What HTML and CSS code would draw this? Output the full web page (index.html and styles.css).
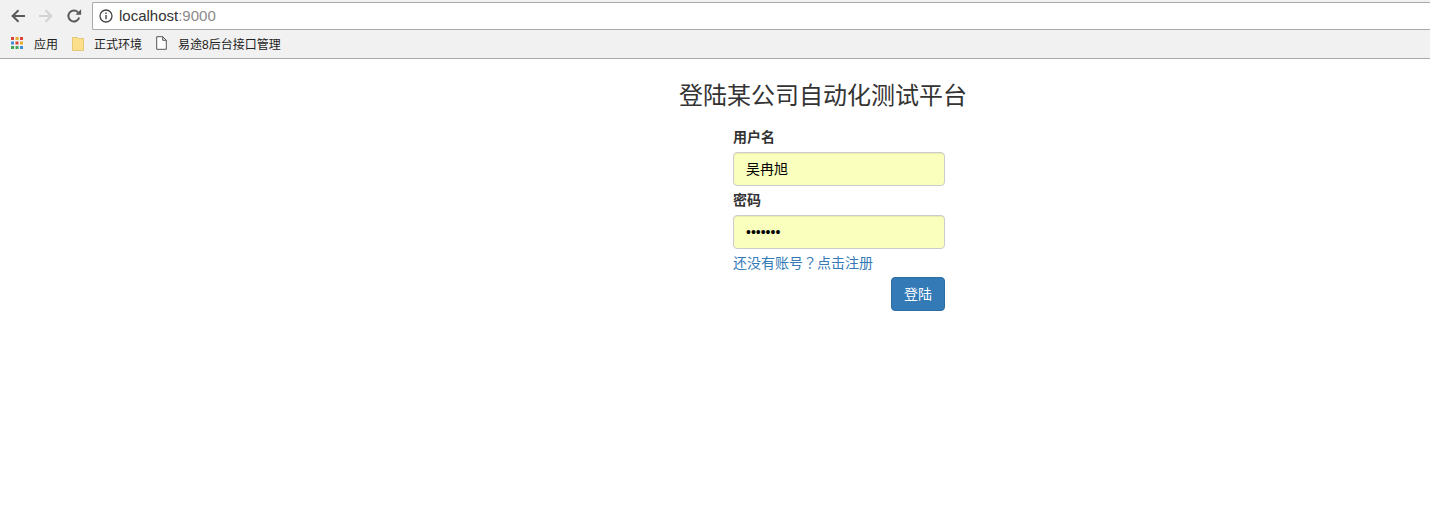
FILE: index.html
```html
<!DOCTYPE html>
<html lang="zh-CN">
<head>
<meta charset="utf-8">
<title>登陆</title>
<link rel="stylesheet" href="styles.css">
</head>
<body>
<header class="chrome">
  <div class="toolbar">
    <svg class="nav nav-back" viewBox="0 0 16 16"><path d="M15 8H3M8.5 2.2 2.6 8l5.900 5.800" fill="none" stroke="#5a5a5a" stroke-width="2"/></svg>
    <svg class="nav nav-fwd" viewBox="0 0 16 16"><path d="M1 8h12M7.500 2.200 13.400 8l-5.900 5.800" fill="none" stroke="#d2d2d2" stroke-width="2"/></svg>
    <svg class="nav nav-reload" viewBox="0 0 16 16"><path d="M13.200 9.500A5.500 5.500 0 1 1 12 4.300" fill="none" stroke="#5a5a5a" stroke-width="2"/><path d="M9.500 6.800h5.600V1.200z" fill="#5a5a5a"/></svg>
    <div class="omnibox">
      <svg class="info" viewBox="0 0 14 14"><circle cx="7" cy="7" r="6" fill="none" stroke="#444" stroke-width="1.300"/><path d="M7 6v4.200M7 3.500v1.400" stroke="#444" stroke-width="1.400"/></svg>
      <span class="host">localhost</span><span class="port">:9000</span>
    </div>
  </div>
  <nav class="bookmarks">
    <a class="bookmark bookmark-apps">
      <svg class="icon-apps" viewBox="0 0 14 14">
        <rect x="1" y="1" width="3" height="3" fill="#d9453c"/><rect x="5.500" y="1" width="3" height="3" fill="#e8ab2e"/><rect x="10" y="1" width="3" height="3" fill="#d9453c"/>
        <rect x="1" y="5.500" width="3" height="3" fill="#3e8fd8"/><rect x="5.500" y="5.500" width="3" height="3" fill="#d9453c"/><rect x="10" y="5.500" width="3" height="3" fill="#e8ab2e"/>
        <rect x="1" y="10" width="3" height="3" fill="#3fa757"/><rect x="5.500" y="10" width="3" height="3" fill="#3fa757"/><rect x="10" y="10" width="3" height="3" fill="#3e8fd8"/>
      </svg>
      <span>应用</span>
    </a>
    <a class="bookmark bookmark-folder">
      <svg class="icon-folder" viewBox="0 0 12 15"><path d="M.5 1.500h5l1 1h5v12H.5z" fill="#fcdf8a" stroke="#e6c677"/></svg>
      <span>正式环境</span>
    </a>
    <a class="bookmark">
      <svg class="icon-page" viewBox="0 0 11 14"><path d="M.7.700h6l3.600 3.600v9H.7zM6.700.700v3.600h3.600" fill="#fff" stroke="#555" stroke-width="1"/></svg>
      <span>易途8后台接口管理</span>
    </a>
  </nav>
</header>
<main class="page">
  <h2 class="title">登陆某公司自动化测试平台</h2>
  <form class="login">
    <label class="label" for="user">用户名</label>
    <div class="field" id="user">吴冉旭</div>
    <label class="label" for="pass">密码</label>
    <div class="field field-pass" id="pass">•••••••</div>
    <a class="register">还没有账号<span class="mark" lang="zh-TW">？</span>点击注册</a>
    <div class="actions"><button class="btn" type="button">登陆</button></div>
  </form>
</main>
</body>
</html>
```

FILE: styles.css
```css
* { box-sizing: border-box; }
html, body { margin: 0; background: #fff; }
body {
  width: 1430px;
  height: 520px;
  overflow: hidden;
  font-family: "Liberation Sans", "Noto Sans CJK SC", sans-serif;
  color: #333;
}
.chrome { background: #f1f1f1; border-bottom: 1px solid #a9a9a9; height: 59px; }
.toolbar { height: 30px; display: flex; align-items: center; padding: 2px 0 0 10px; }
.nav { width: 16px; height: 16px; flex: none; margin-top: -1px; }
.nav-fwd { margin-left: 12px; }
.nav-reload { margin-left: 12px; }
.omnibox {
  margin-left: 10px;
  flex: 1;
  height: 28px;
  margin-top: -1px;
  background: #fff;
  border: 1px solid #a9a9a9;
  border-right: none;
  border-radius: 2px 0 0 2px;
  display: flex;
  align-items: center;
  padding-left: 6px;
  font-size: 15px;
}
.info { width: 14px; height: 14px; margin-right: 6px; }
.host { color: #333; }
.port { color: #8a8a8a; }
.bookmarks { height: 28px; display: flex; align-items: center; font-size: 12px; color: #222; padding: 0 0 2px 10px; }
.bookmark { display: flex; align-items: center; }
.bookmark-apps { margin-right: 14px; }
.bookmark-folder { margin-right: 14px; }
.icon-apps { width: 14px; height: 14px; margin-right: 10px; }
.icon-folder { width: 12px; height: 15px; margin-right: 10px; }
.icon-page { width: 11px; height: 14px; margin-right: 11px; }
.page { padding-left: 679px; }
.title {
  margin: 20px 0 0;
  font-size: 24px;
  font-weight: 400;
  line-height: 34px;
}
.login { width: 212px; margin: 14px 0 0 54px; display: flex; flex-direction: column; font-size: 14px; line-height: 20px; }
.label { font-weight: 700; height: 20px; margin-bottom: 5px; color: #333; line-height: 20px; }
.field {
  height: 34px;
  background: #faffbd;
  border: 1px solid #ccc;
  border-radius: 4px;
  padding: 6px 12px;
  color: #000;
  box-shadow: inset 0 1px 1px rgba(0,0,0,.075);
  margin-bottom: 4px;
}
.register { color: #337ab7; height: 20px; line-height: 18px; }
.mark { font-family: "Noto Sans CJK TC", sans-serif; }
.actions { display: flex; justify-content: flex-end; margin-top: 4px; }
.btn {
  width: 54px;
  height: 34px;
  background: #337ab7;
  border: 1px solid #2e6da4;
  border-radius: 4px;
  color: #fff;
  font: inherit;
  line-height: 30px;
  padding: 0;
}
```
